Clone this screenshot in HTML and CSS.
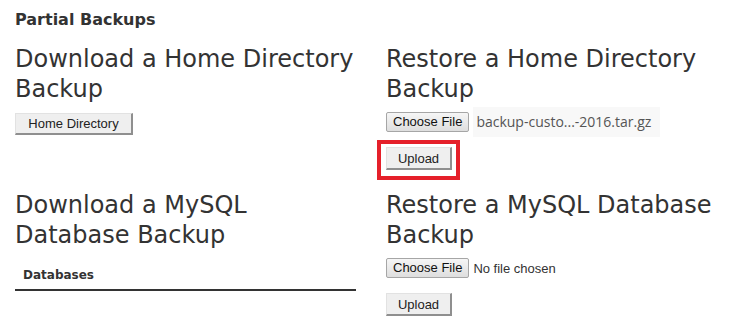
FILE: index.html
```html
<!DOCTYPE html>
<html lang="en">
<head>
    <meta charset="UTF-8">
    <meta name="viewport" content="width=device-width, initial-scale=1.0">
    <title>Backups</title>
    <link rel="stylesheet" href="styles.css">
</head>
<body>
    <div class="page">
        <h3 class="section-title">Partial Backups</h3>

        <div class="backup-grid">
            <section class="backup-block">
                <h2>Download a Home Directory Backup</h2>
                <button class="legacy-btn">Home Directory</button>
            </section>

            <section class="backup-block">
                <h2>Restore a Home Directory Backup</h2>
                <div class="file-row">
                    <span class="file-btn">Choose File</span>
                    <span class="file-name selected">backup-custo...-2016.tar.gz</span>
                </div>
                <div class="upload-wrap highlighted">
                    <button class="legacy-btn upload-btn">Upload</button>
                </div>
            </section>

            <section class="backup-block">
                <h2>Download a MySQL Database Backup</h2>
                <table class="db-table">
                    <thead>
                        <tr><th>Databases</th></tr>
                    </thead>
                </table>
            </section>

            <section class="backup-block">
                <h2>Restore a MySQL Database Backup</h2>
                <div class="file-row">
                    <span class="file-btn">Choose File</span>
                    <span class="file-name">No file chosen</span>
                </div>
                <div class="upload-wrap">
                    <button class="legacy-btn upload-btn">Upload</button>
                </div>
            </section>
        </div>
    </div>
</body>
</html>
```

FILE: styles.css
```css
/* Reset and base styles */
* {
    margin: 0;
    padding: 0;
    box-sizing: border-box;
}

body {
    font-family: "DejaVu Sans", Verdana, sans-serif;
    background-color: #fff;
    color: #333;
}

.page {
    padding: 10px 15px 0 15px;
}

.section-title {
    font-size: 16px;
    font-weight: bold;
    line-height: 20px;
    color: #333;
    margin-bottom: 14px;
}

/* Layout */
.backup-grid {
    display: grid;
    grid-template-columns: 341px 1fr;
    column-gap: 30px;
    row-gap: 20px;
}

.backup-block h2 {
    font-size: 24px;
    font-weight: normal;
    line-height: 30px;
    color: #333;
}

/* Old style buttons */
.legacy-btn {
    font-family: "Liberation Sans", Arial, sans-serif;
    font-size: 13px;
    color: #222;
    background-color: #efefef;
    border: 1px solid #e2e2e2;
    border-right: 2px solid #8f8f8f;
    border-bottom: 2px solid #8f8f8f;
    height: 22px;
    width: 118px;
    padding: 0 10px;
    margin-top: 9px;
    cursor: pointer;
}

.upload-btn {
    width: 66px;
    height: 23px;
    margin-top: 0;
}

/* File input */
.file-row {
    display: flex;
    align-items: center;
    height: 30px;
    margin-top: 3px;
}

.file-btn {
    font-family: "Liberation Sans", Arial, sans-serif;
    font-size: 13px;
    color: #111;
    height: 20px;
    line-height: 18px;
    padding: 0 6px;
    border: 1px solid #a6a6a6;
    border-radius: 2px;
    background: linear-gradient(#f6f6f6, #dedede);
}

.file-name {
    font-family: "Liberation Sans", Arial, sans-serif;
    font-size: 13px;
    color: #333;
    margin-left: 4px;
}

.file-name.selected {
    font-family: "Open Sans", sans-serif;
    font-size: 14px;
    color: #555;
    background-color: #f8f8f8;
    height: 30px;
    line-height: 30px;
    padding: 0 3px;
    width: 187px;
}

.upload-wrap {
    position: relative;
    margin-top: 10px;
    width: 66px;
}

.upload-wrap.highlighted::after {
    content: "";
    position: absolute;
    left: -9px;
    top: -7px;
    right: -8px;
    bottom: -10px;
    border: 4px solid #e5202a;
}

/* Databases table */
.db-table {
    width: 100%;
    border-collapse: collapse;
    margin-top: 18px;
}

.db-table th {
    font-size: 12px;
    font-weight: bold;
    text-align: left;
    padding: 0 8px 7px 8px;
    border-bottom: 2px solid #333;
}
```
